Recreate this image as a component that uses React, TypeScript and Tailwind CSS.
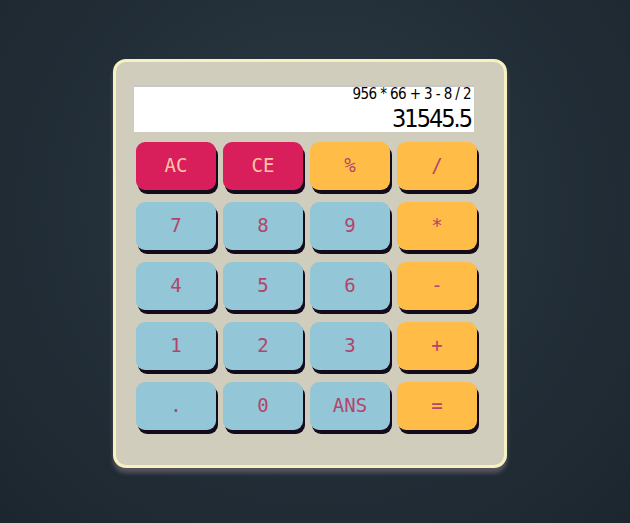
const rows: { label: string; kind: 'red' | 'orange' | 'blue' }[][] = [
  [
    { label: 'AC', kind: 'red' },
    { label: 'CE', kind: 'red' },
    { label: '%', kind: 'orange' },
    { label: '/', kind: 'orange' },
  ],
  [
    { label: '7', kind: 'blue' },
    { label: '8', kind: 'blue' },
    { label: '9', kind: 'blue' },
    { label: '*', kind: 'orange' },
  ],
  [
    { label: '4', kind: 'blue' },
    { label: '5', kind: 'blue' },
    { label: '6', kind: 'blue' },
    { label: '-', kind: 'orange' },
  ],
  [
    { label: '1', kind: 'blue' },
    { label: '2', kind: 'blue' },
    { label: '3', kind: 'blue' },
    { label: '+', kind: 'orange' },
  ],
  [
    { label: '.', kind: 'blue' },
    { label: '0', kind: 'blue' },
    { label: 'ANS', kind: 'blue' },
    { label: '=', kind: 'orange' },
  ],
];

const kindClass = {
  red: 'bg-[#d81e5b] text-[#ffc4a6]',
  orange: 'bg-[#ffbc47] text-[#b3446c]',
  blue: 'bg-[#93c6d7] text-[#b3446c]',
};

const App = () => {
  return (
    <div className="flex h-[523px] w-[630px] bg-[radial-gradient(circle_at_50%_40%,#2e3d49_0%,#24303a_45%,#1c262e_100%)] pt-[59px] pl-[113px]">
      <div className="h-[409px] w-[394px] rounded-[13px] border-[3px] border-[#f6f1c1] bg-[#d0cdbc] px-[18px] pt-[23px] shadow-[0_5px_4px_#55545e]">
        <div className="flex h-[47px] w-[340px] flex-col items-end border-t-2 border-[#c7c7c7] bg-white pr-[3px] font-['DejaVu_Sans_Condensed',sans-serif] leading-none text-black">
          <p className="text-[15px] tracking-[-0.6px]">956 * 66 + 3 - 8 / 2</p>
          <p className="mt-[4px] text-[25px] tracking-[-2px]">31545.5</p>
        </div>
        <div className="mt-[10px] ml-[2px] flex flex-col gap-[12px]">
          {rows.map((row, i) => (
            <div key={i} className="flex gap-[7px]">
              {row.map(btn => (
                <div
                  key={btn.label}
                  className={`flex h-[48px] w-[80px] items-center justify-center rounded-[9px] pb-[2px] font-['DejaVu_Sans_Mono',monospace] text-[19px] shadow-[2px_4px_0_#130b1c] ${kindClass[btn.kind]}`}
                >
                  {btn.label}
                </div>
              ))}
            </div>
          ))}
        </div>
      </div>
    </div>
  );
};

export default App;
